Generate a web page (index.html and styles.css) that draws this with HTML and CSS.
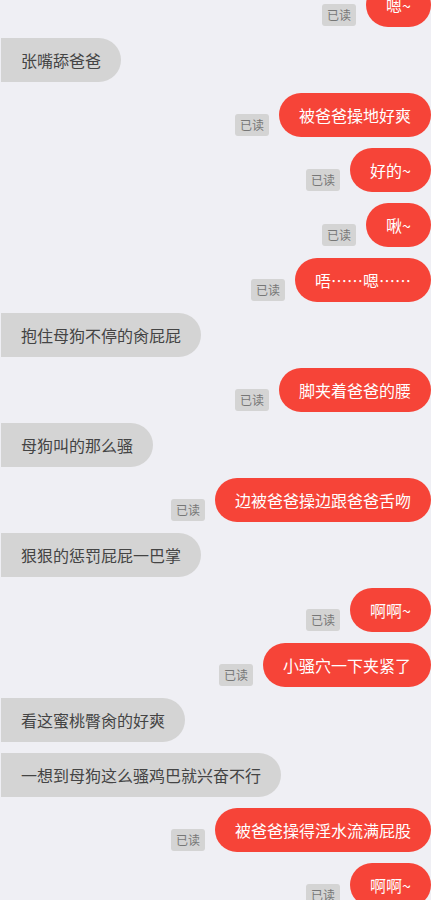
FILE: index.html
```html
<!DOCTYPE html>
<html lang="zh-CN">
<head>
    <meta charset="UTF-8">
    <meta name="viewport" content="width=device-width, initial-scale=1.0">
    <title>聊天</title>
    <link rel="stylesheet" href="styles.css">
</head>
<body>
    <div class="chat">
        <div class="row me"><span class="read">已读</span><div class="bubble">嗯~</div></div>
        <div class="row other"><div class="bubble">张嘴舔爸爸</div></div>
        <div class="row me"><span class="read">已读</span><div class="bubble">被爸爸操地好爽</div></div>
        <div class="row me"><span class="read">已读</span><div class="bubble">好的~</div></div>
        <div class="row me"><span class="read">已读</span><div class="bubble">啾~</div></div>
        <div class="row me"><span class="read">已读</span><div class="bubble">唔……嗯……</div></div>
        <div class="row other"><div class="bubble">抱住母狗不停的肏屁屁</div></div>
        <div class="row me"><span class="read">已读</span><div class="bubble">脚夹着爸爸的腰</div></div>
        <div class="row other"><div class="bubble">母狗叫的那么骚</div></div>
        <div class="row me"><span class="read">已读</span><div class="bubble">边被爸爸操边跟爸爸舌吻</div></div>
        <div class="row other"><div class="bubble">狠狠的惩罚屁屁一巴掌</div></div>
        <div class="row me"><span class="read">已读</span><div class="bubble">啊啊~</div></div>
        <div class="row me"><span class="read">已读</span><div class="bubble">小骚穴一下夹紧了</div></div>
        <div class="row other"><div class="bubble">看这蜜桃臀肏的好爽</div></div>
        <div class="row other"><div class="bubble">一想到母狗这么骚鸡巴就兴奋不行</div></div>
        <div class="row me"><span class="read">已读</span><div class="bubble">被爸爸操得淫水流满屁股</div></div>
        <div class="row me"><span class="read">已读</span><div class="bubble">啊啊~</div></div>
    </div>
</body>
</html>
```

FILE: styles.css
```css
body {
    margin: 0;
    padding: 0;
    background-color: #efeff4;
    font-family: "Noto Sans CJK SC", "Noto Sans", sans-serif;
    overflow: hidden;
}
.chat {
    display: flex;
    flex-direction: column;
    gap: 11px;
    margin-top: -17px;
}
.row {
    display: flex;
    align-items: flex-end;
}
.row.me {
    justify-content: flex-end;
}
.row.other {
    justify-content: flex-start;
    padding-left: 1px;
}
.bubble {
    height: 44px;
    line-height: 44px;
    padding: 0 20px;
    font-size: 16px;
    white-space: nowrap;
}
.me .bubble {
    background-color: #f64438;
    color: #ffffff;
    border-radius: 22px;
}
.other .bubble {
    background-color: #d4d4d4;
    color: #444444;
    border-radius: 0 22px 22px 0;
}
.read {
    background-color: #d4d4d4;
    color: #777777;
    font-size: 12px;
    line-height: 22px;
    height: 22px;
    padding: 0 5px;
    border-radius: 3px;
    margin-right: 10px;
    margin-bottom: 1px;
}
```
